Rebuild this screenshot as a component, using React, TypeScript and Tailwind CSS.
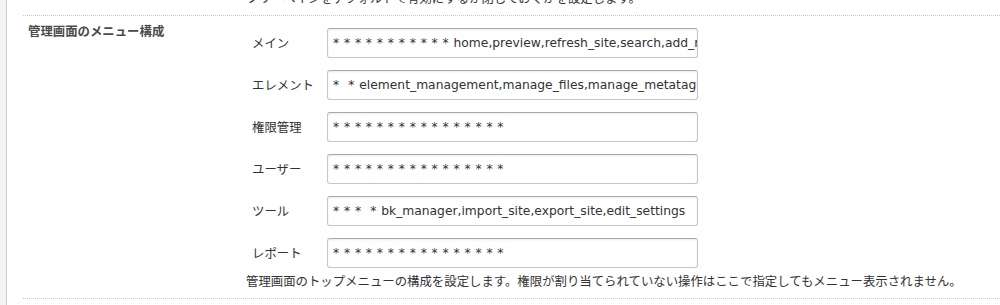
import React from 'react';

const jp = "font-['Noto_Sans_CJK_JP','Noto_Sans',sans-serif]";

const menus = [
  { label: 'メイン', stars: '* * * * * * * * * * * ', text: 'home,preview,refresh_site,search,add_new,help' },
  { label: 'エレメント', stars: '*  * ', text: 'element_management,manage_files,manage_metatags,manage_modules' },
  { label: '権限管理', stars: '* * * * * * * * * * * * * * * *', text: '' },
  { label: 'ユーザー', stars: '* * * * * * * * * * * * * * * *', text: '' },
  { label: 'ツール', stars: '* * *  * ', text: 'bk_manager,import_site,export_site,edit_settings' },
  { label: 'レポート', stars: '* * * * * * * * * * * * * * * *', text: '' },
];

const App = () => {
  return (
    <div className={`flex h-[305px] w-[1000px] overflow-hidden bg-white text-[#333] ${jp}`}>
      <div className="w-[7px] shrink-0 border-r border-[#cfcfcf] bg-[#f3f3f3]" />

      <div className="flex-1 pl-[16px]">
        {/* previous row, cut off at the top */}
        <div className="h-[16px] overflow-hidden border-b border-dotted border-[#c8c8c8]">
          <p className="-mt-[12px] pl-[223px] text-[12.4px] leading-[20px] whitespace-nowrap">
            ツリーペインをデフォルトで有効にするか閉じておくかを設定します。
          </p>
        </div>

        <div className="flex border-b border-dotted border-[#c8c8c8] pb-[7px]">
          <div className="w-[223px] shrink-0 pl-[5px] pt-[5px]">
            <h3 className="text-[12.4px] font-bold leading-[20px] text-[#4a4a4a]">管理画面のメニュー構成</h3>
          </div>

          <div className="flex flex-col pt-[12px]">
            <div className="flex flex-col gap-[12px]">
              {menus.map((m) => (
                <div key={m.label} className="flex h-[30px] items-center">
                  <span className="w-[81px] shrink-0 pl-[6px] text-[12.4px] text-[#333]">{m.label}</span>
                  <div className="flex h-[30px] w-[371px] items-center overflow-hidden rounded-[3px] border border-[#c6c6c6] border-t-[#a9a9a9] bg-white px-[5px] font-['DejaVu_Sans',sans-serif] text-[12.3px] whitespace-pre text-[#333] shadow-[inset_0_1px_2px_rgba(0,0,0,0.08)]">
                    <span className="tracking-[0.45px]">{m.stars}</span>
                    <span>{m.text}</span>
                  </div>
                </div>
              ))}
            </div>
            <p className="mt-[3px] text-[12.4px] leading-[20px] whitespace-nowrap text-[#333]">
              管理画面のトップメニューの構成を設定します。権限が割り当てられていない操作はここで指定してもメニュー表示されません。
            </p>
          </div>
        </div>
      </div>
    </div>
  );
};

export default App;
